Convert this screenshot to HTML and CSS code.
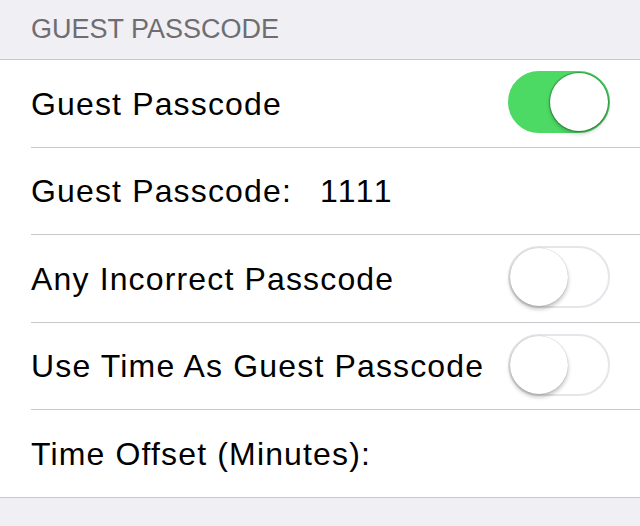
FILE: index.html
```html
<!DOCTYPE html>
<html>
<head>
<meta charset="utf-8">
<link rel="stylesheet" href="styles.css">
</head>
<body>
<div class="page">
  <div class="header">GUEST PASSCODE</div>
  <div class="group">
    <div class="row">
      <span class="label">Guest Passcode</span>
      <span class="switch on"><span class="knob"></span></span>
    </div>
    <div class="row">
      <span class="label">Guest Passcode:<span class="value">1111</span></span>
    </div>
    <div class="row">
      <span class="label">Any Incorrect Passcode</span>
      <span class="switch"><span class="knob"></span></span>
    </div>
    <div class="row">
      <span class="label">Use Time As Guest Passcode</span>
      <span class="switch"><span class="knob"></span></span>
    </div>
    <div class="row last">
      <span class="label">Time Offset (Minutes):</span>
    </div>
  </div>
</div>
</body>
</html>
```

FILE: styles.css
```css
html, body {
  margin: 0;
  padding: 0;
  background: #efeff4;
}
.page {
  width: 640px;
  height: 526px;
  background: #efeff4;
  font-family: "Liberation Sans", Arial, sans-serif;
  overflow: hidden;
}
.header {
  height: 59px;
  box-sizing: border-box;
  padding: 13px 0 0 31px;
  font-size: 27px;
  line-height: 32px;
  color: #6d6d72;
}
.group {
  background: #fff;
  border-top: 1px solid #c8c7cc;
  border-bottom: 1px solid #c8c7cc;
}
.row {
  height: 86.5px;
  margin-left: 31px;
  padding-right: 30px;
  display: flex;
  align-items: center;
  justify-content: space-between;
  border-bottom: 1px solid #c8c7cc;
}
.row.last {
  border-bottom: none;
}
.label {
  font-size: 32px;
  letter-spacing: 1.15px;
  color: #000;
  padding-top: 2px;
}
.value {
  margin-left: 28px;
  letter-spacing: 2.5px;
}
.switch {
  position: relative;
  width: 102px;
  height: 62px;
  box-sizing: border-box;
  border-radius: 31px;
  border: 2px solid #e5e5ea;
  background: #fff;
  flex: none;
  margin-top: -2px;
}
.switch.on {
  background: #4cd964;
  border-color: #4cd964;
}
.knob {
  position: absolute;
  top: 0;
  left: 0;
  width: 58px;
  height: 58px;
  border-radius: 50%;
  background: #fff;
  box-shadow: 0 3px 4px rgba(0,0,0,0.25), 0 0 1px rgba(0,0,0,0.3);
}
.switch.on .knob {
  left: 40px;
  box-shadow: 0 3px 4px rgba(0,0,0,0.2), 0 0 1px 1px rgba(40,110,50,0.6);
}
```
